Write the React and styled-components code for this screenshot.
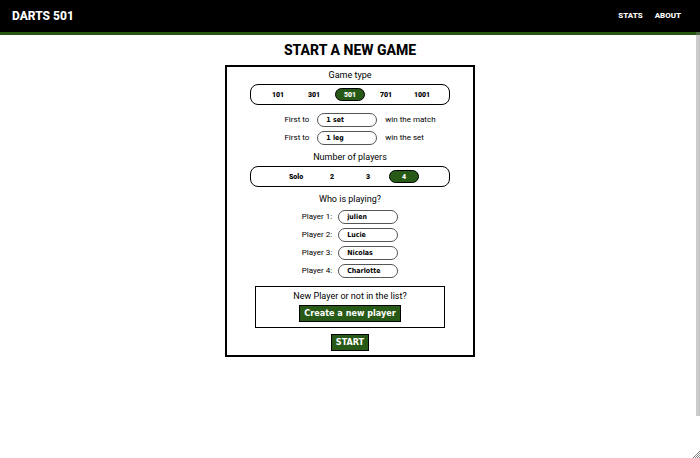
import React, { useState } from "react";
import styled, { createGlobalStyle } from "styled-components";

const GlobalStyle = createGlobalStyle`
  * { box-sizing: border-box; }
  body {
    margin: 0;
    background: #fff;
    color: #000;
    font-family: Roboto, sans-serif;
  }
`;

const green = "#275a16";

const Header = styled.header`
  display: flex;
  align-items: center;
  justify-content: space-between;
  height: 35px;
  padding: 0 19px 0 12px;
  background: #000;
  border-bottom: 3px solid #255713;
`;

const Brand = styled.a`
  color: #fff;
  font-size: 12px;
  font-weight: 800;
  line-height: 16px;
  text-decoration: none;
`;

const Nav = styled.nav`
  display: flex;
  gap: 12px;
`;

const NavLink = styled.a`
  color: #fff;
  font-size: 8px;
  font-weight: 800;
  line-height: 12px;
  text-decoration: none;
`;

const Main = styled.main`
  display: flex;
  flex-direction: column;
  align-items: center;
  padding: 6px 8px;
`;

const Title = styled.h1`
  margin: 0 0 6px;
  font-size: 14px;
  font-weight: 800;
  line-height: 18px;
`;

const Card = styled.form`
  display: flex;
  flex-direction: column;
  align-items: center;
  width: 100%;
  max-width: 250px;
  padding: 1px 20px 4px;
  border: 2px solid #000;
`;

const Group = styled.fieldset`
  display: flex;
  flex-direction: column;
  align-items: center;
  width: 100%;
  min-width: 0;
  margin: 0;
  padding: 0 3px;
  border: 0;
`;

const Legend = styled.legend`
  padding: 0;
  margin: 0 auto;
  font-size: 9px;
  line-height: 14px;
`;

const Options = styled.div`
  display: flex;
  justify-content: center;
  align-items: center;
  gap: 6px;
  width: 100%;
  height: 21px;
  margin: 2px 0 5px;
  border: 1px solid #000;
  border-radius: 8px;
`;

const Pill = styled.label`
  display: flex;
  align-items: center;
  justify-content: center;
  width: 30px;
  height: 13px;
  border: 1px solid transparent;
  border-radius: 7px;
  font-size: 7px;
  font-weight: 900;
  cursor: pointer;

  &:has(input:checked) {
    background: ${green};
    border-color: #000;
    color: #fff;
  }
`;

const Radio = styled.input`
  appearance: none;
  width: 0;
  height: 0;
  margin: 0;
`;

const Rules = styled.div`
  display: grid;
  grid-template-columns: auto 60px auto;
  align-items: center;
  gap: 4px 8px;
  margin: 3px 0 5px;
  padding-left: 20px;
  font-size: 8px;
  line-height: 14px;
`;

const Players = styled.div`
  display: grid;
  grid-template-columns: auto 60px;
  align-items: center;
  gap: 4px 6px;
  margin: 4px 0 8px;
  font-size: 8px;
  line-height: 14px;
`;

const Select = styled.select`
  appearance: none;
  width: 60px;
  height: 14px;
  margin: 0;
  padding: 0 8px;
  border: 1px solid #555;
  border-radius: 7px;
  background: #fff;
  color: #000;
  font: 700 7px/12px "DejaVu Sans Condensed", "Noto Sans", sans-serif;
`;

const NewPlayer = styled.section`
  display: flex;
  flex-direction: column;
  align-items: center;
  gap: 2px;
  width: 100%;
  max-width: 190px;
  margin-bottom: 6px;
  padding: 2px 4px 5px;
  border: 1px solid #000;
`;

const Hint = styled.p`
  margin: 0;
  font-size: 9px;
  line-height: 14px;
`;

const Button = styled.button`
  height: 17px;
  margin: 0;
  padding: 0 4px;
  border: 1px solid #000;
  background: ${green};
  color: #fff;
  font: 700 9px/15px "DejaVu Sans Condensed", "Noto Sans", sans-serif;
  cursor: pointer;
`;

const ScrollThumb = styled.div`
  position: fixed;
  top: 32px;
  right: 0;
  width: 4px;
  height: 384px;
  border-right: 1px solid rgba(128, 128, 128, 0.1);
  background: rgba(128, 128, 128, 0.4);
`;

const Grip = styled.svg`
  position: fixed;
  right: 0;
  bottom: 0;
  width: 8px;
  height: 8px;
`;

function Choice({ legend, name, options, initial }) {
  const [value, setValue] = useState(initial);
  return (
    <Group>
      <Legend>{legend}</Legend>
      <Options>
        {options.map((option) => (
          <Pill key={option}>
            <Radio
              type="radio"
              name={name}
              value={option}
              checked={value === option}
              onChange={() => setValue(option)}
            />
            {option}
          </Pill>
        ))}
      </Options>
    </Group>
  );
}

const rules = [
  { id: "sets", values: ["1 set", "2 sets", "3 sets"], goal: "win the match" },
  { id: "legs", values: ["1 leg", "2 legs", "3 legs"], goal: "win the set" },
];

const players = ["julien", "Lucie", "Nicolas", "Charlotte"];

export default function App() {
  return (
    <>
      <GlobalStyle />
      <Header>
        <Brand href="#home">DARTS 501</Brand>
        <Nav>
          <NavLink href="#stats">STATS</NavLink>
          <NavLink href="#about">ABOUT</NavLink>
        </Nav>
      </Header>
      <Main>
        <Title>START A NEW GAME</Title>
        <Card onSubmit={(event) => event.preventDefault()}>
          <Choice
            legend="Game type"
            name="game"
            options={["101", "301", "501", "701", "1001"]}
            initial="501"
          />
          <Rules>
            {rules.map(({ id, values, goal }) => (
              <React.Fragment key={id}>
                <label htmlFor={id}>First to</label>
                <Select id={id}>
                  {values.map((value) => (
                    <option key={value}>{value}</option>
                  ))}
                </Select>
                <span>{goal}</span>
              </React.Fragment>
            ))}
          </Rules>
          <Choice
            legend="Number of players"
            name="count"
            options={["Solo", "2", "3", "4"]}
            initial="4"
          />
          <Group>
            <Legend>Who is playing?</Legend>
            <Players>
              {players.map((player, index) => (
                <React.Fragment key={player}>
                  <label htmlFor={`player-${index}`}>Player {index + 1}:</label>
                  <Select id={`player-${index}`} defaultValue={player}>
                    {players.map((name) => (
                      <option key={name}>{name}</option>
                    ))}
                  </Select>
                </React.Fragment>
              ))}
            </Players>
          </Group>
          <NewPlayer>
            <Hint>New Player or not in the list?</Hint>
            <Button type="button">Create a new player</Button>
          </NewPlayer>
          <Button type="submit">START</Button>
        </Card>
      </Main>
      <ScrollThumb />
      <Grip viewBox="0 0 8 8" aria-hidden="true">
        <path d="M1 8 8 1M3 8 8 3M5 8 8 5M7 8 8 7" stroke="#888" strokeWidth="1" />
      </Grip>
    </>
  );
}
